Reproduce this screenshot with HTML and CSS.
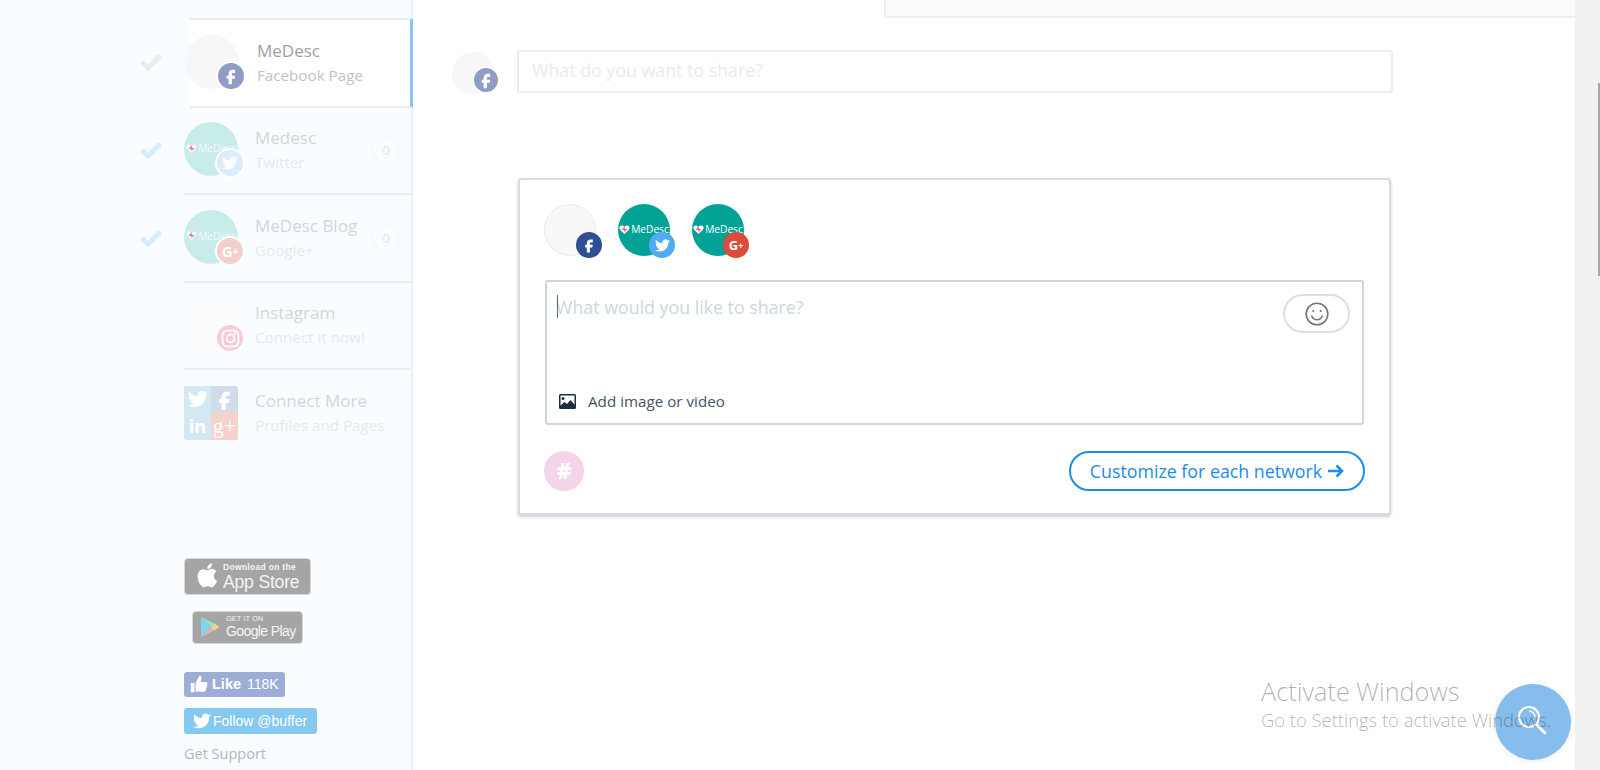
FILE: index.html
```html
<!DOCTYPE html>
<html lang="en">

<head>
  <meta charset="UTF-8">
  <title>Buffer</title>
  <link rel="stylesheet" href="styles.css">
</head>

<body>
  <svg class="defs" width="0" height="0">
    <symbol id="i-fb" viewBox="0 0 24 24"><path d="M14 8.5h3V4.6h-3c-2.9 0-4.9 2-4.9 4.9v2.1H6.8v3.8h2.3V22h4.1v-6.6h3.2l.6-3.800h-3.800V9.500c0-.6.3-1 .8-1z"/></symbol>
    <symbol id="i-tw" viewBox="0 0 24 24"><path d="M23.95 4.57a10 10 0 0 1-2.82.78 4.96 4.96 0 0 0 2.16-2.72c-.95.55-2 .96-3.13 1.19a4.92 4.92 0 0 0-8.38 4.48C7.69 8.1 4.07 6.13 1.64 3.16a4.82 4.82 0 0 0-.67 2.48c0 1.71.87 3.21 2.19 4.1a4.9 4.9 0 0 1-2.23-.62v.06a4.92 4.92 0 0 0 3.95 4.83 5 5 0 0 1-2.21.08 4.94 4.94 0 0 0 4.6 3.42A9.87 9.87 0 0 1 0 19.54a14 14 0 0 0 7.56 2.21c9.05 0 14-7.5 14-13.98 0-.21 0-.42-.02-.63A9.94 9.94 0 0 0 24 4.59z"/></symbol>
    <symbol id="i-heart" viewBox="0 0 24 24">
      <path d="M12 22 2.500 12.500C-.5 9.500.5 3 6.500 3 9 3 11 4.500 12 6.500 13 4.500 15 3 17.500 3c6 0 7 6.500 4 9.500z"/>
      <path d="M6 12h3l2-4 2 7 2-3h3" fill="none" stroke="#e8606a" stroke-width="2.500"/>
    </symbol>
    <symbol id="i-check" viewBox="0 0 24 18"><path d="M1 9.500 4.500 6l4.500 4.500L19.500 0 23.500 3.500 9 17.500z"/></symbol>
  </svg>

  <aside class="sidebar">
    <div class="row row-first">
      <div class="check-col"><svg class="check check-grey"><use href="#i-check"/></svg></div>
      <div class="row-body row-active">
        <div class="avatar avatar-blank">
          <span class="badge badge-fb-dim"><svg class="glyph glyph-f"><use href="#i-fb"/></svg></span>
        </div>
        <div class="row-text">
          <div class="row-name name-strong">MeDesc</div>
          <div class="row-sub sub-strong">Facebook Page</div>
        </div>
      </div>
    </div>

    <div class="row">
      <div class="check-col"><svg class="check"><use href="#i-check"/></svg></div>
      <div class="row-body">
        <div class="avatar avatar-teal-dim">
          <span class="logo"><svg class="logo-heart"><use href="#i-heart"/></svg>MeDesc</span>
          <span class="badge badge-tw-dim"><svg class="glyph"><use href="#i-tw"/></svg></span>
        </div>
        <div class="row-text">
          <div class="row-name">Medesc</div>
          <div class="row-sub">Twitter</div>
        </div>
        <span class="count">0</span>
      </div>
    </div>

    <div class="row">
      <div class="check-col"><svg class="check"><use href="#i-check"/></svg></div>
      <div class="row-body">
        <div class="avatar avatar-teal-dim">
          <span class="logo"><svg class="logo-heart"><use href="#i-heart"/></svg>MeDesc</span>
          <span class="badge badge-gp-dim gp-text">G<small>+</small></span>
        </div>
        <div class="row-text">
          <div class="row-name">MeDesc Blog</div>
          <div class="row-sub">Google+</div>
        </div>
        <span class="count">0</span>
      </div>
    </div>

    <div class="row">
      <div class="check-col"></div>
      <div class="row-body">
        <div class="avatar avatar-faint">
          <span class="badge badge-ig-dim">
            <svg class="glyph glyph-ig" viewBox="0 0 24 24" fill="none" stroke="#fff" stroke-width="2">
              <rect x="3" y="3" width="18" height="18" rx="5"/>
              <circle cx="12" cy="12" r="4.300"/>
              <circle cx="17.300" cy="6.700" r=".6"/>
            </svg>
          </span>
        </div>
        <div class="row-text">
          <div class="row-name">Instagram</div>
          <div class="row-sub">Connect it now!</div>
        </div>
      </div>
    </div>

    <div class="row">
      <div class="check-col"></div>
      <div class="row-body row-last">
        <div class="tiles">
          <span class="tile tile-tw"><svg class="glyph glyph-tile"><use href="#i-tw"/></svg></span>
          <span class="tile tile-fb"><svg class="glyph glyph-tile-f"><use href="#i-fb"/></svg></span>
          <span class="tile tile-in">in</span>
          <span class="tile tile-gp">g+</span>
        </div>
        <div class="row-text">
          <div class="row-name">Connect More</div>
          <div class="row-sub">Profiles and Pages</div>
        </div>
      </div>
    </div>

    <div class="side-foot">
      <div class="store store-apple">
        <svg class="apple" viewBox="0 0 24 24"><path d="M17.05 12.04c-.03-2.6 2.12-3.85 2.22-3.91-1.21-1.77-3.09-2.01-3.76-2.04-1.6-.16-3.12.94-3.93.94-.81 0-2.06-.92-3.39-.89-1.74.03-3.35 1.01-4.25 2.57-1.81 3.14-.46 7.8 1.3 10.35.86 1.25 1.89 2.65 3.24 2.6 1.3-.05 1.79-.84 3.36-.84 1.57 0 2.01.84 3.38.81 1.4-.03 2.28-1.27 3.14-2.53.99-1.45 1.39-2.85 1.42-2.92-.03-.01-2.72-1.04-2.75-4.14zM14.47 4.4c.72-.87 1.2-2.08 1.07-3.29-1.03.04-2.29.69-3.03 1.56-.66.77-1.24 2-1.09 3.18 1.15.09 2.33-.58 3.05-1.45z"/></svg>
        <div>
          <div class="store-small store-small-apple">Download on the</div>
          <div class="store-big">App Store</div>
        </div>
      </div>
      <div class="store store-google">
        <svg class="play" viewBox="0 0 20 22">
          <path fill="#7fd4ee" d="M1 1v20l10-10z"/>
          <path fill="#9fe0b8" d="M1 1l10 10 3.4-3.4z"/>
          <path fill="#eeb0ae" d="M1 21l10-10 3.4 3.4z"/>
          <path fill="#f1d68e" d="M14.4 7.6 11 11l3.4 3.4L19.500 11z"/>
        </svg>
        <div class="store-google-text">
          <div class="store-small">GET IT ON</div>
          <div class="store-big store-big-google">Google Play</div>
        </div>
      </div>
      <div class="social social-like">
        <svg class="thumb" viewBox="0 0 24 24"><path d="M1 10.500h5V23H1zM7.500 22V10.500L12.500 1c2.300 0 3.200 1.800 2.700 3.800l-1 4.400H21c2 0 2.600 1.500 2.200 3l-2.200 8c-.4 1.300-1.300 2-2.600 2z"/></svg>
        <b>Like</b> 118K
      </div>
      <div class="social social-follow">
        <svg class="thumb"><use href="#i-tw"/></svg>
        Follow @buffer
      </div>
      <div class="support">Get Support</div>
    </div>
  </aside>

  <main class="main">
    <div class="top-strip"></div>

    <div class="quick">
      <div class="mini-avatar">
        <span class="badge badge-fb-dim badge-mini"><svg class="glyph glyph-f"><use href="#i-fb"/></svg></span>
      </div>
      <div class="quick-input">What do you want to share?</div>
    </div>

    <section class="card">
      <div class="profiles">
        <div class="profile profile-blank">
          <span class="badge-sm badge-fb"><svg class="glyph-sm glyph-sm-f"><use href="#i-fb"/></svg></span>
        </div>
        <div class="profile profile-teal">
          <span class="logo logo-sm"><svg class="logo-heart"><use href="#i-heart"/></svg>MeDesc</span>
          <span class="badge-sm badge-tw"><svg class="glyph-sm"><use href="#i-tw"/></svg></span>
        </div>
        <div class="profile profile-teal">
          <span class="logo logo-sm"><svg class="logo-heart"><use href="#i-heart"/></svg>MeDesc</span>
          <span class="badge-sm badge-gp gp-text-sm">G<small>+</small></span>
        </div>
      </div>

      <div class="editor">
        <div class="editor-top">
          <div class="placeholder"><span class="caret"></span>What would you like to share?</div>
          <div class="emoji">
            <svg width="24" height="24" viewBox="0 0 24 24" fill="none" stroke="#777" stroke-width="1.600">
              <circle cx="12" cy="12" r="10.800"/>
              <circle cx="8.300" cy="9" r="1.100" fill="#777" stroke="none"/>
              <circle cx="15.700" cy="9" r="1.100" fill="#777" stroke="none"/>
              <path d="M6.800 14c1 2.600 3 3.800 5.200 3.800s4.200-1.200 5.200-3.800" stroke-linecap="round"/>
            </svg>
          </div>
        </div>
        <div class="add-media">
          <svg class="media-icon" viewBox="0 0 17 15">
            <path fill="#1f2d3d" fill-rule="evenodd" d="M1.500 0h14A1.500 1.500 0 0 1 17 1.500v12a1.500 1.500 0 0 1-1.500 1.500h-14A1.500 1.500 0 0 1 0 13.500v-12A1.500 1.500 0 0 1 1.500 0zM1.500 1.500v10l4-3.500 2.500 2 3.500-4 4 4.500v-9zM4 3a1.500 1.500 0 1 1 0 3 1.500 1.500 0 0 1 0-3z"/>
          </svg>
          Add image or video
        </div>
      </div>

      <div class="card-foot">
        <div class="hash">#</div>
        <div class="customize">Customize for each network
          <svg class="arrow" viewBox="0 0 16 14" fill="none" stroke="#1c8de8" stroke-width="2.600"><path d="M0 7h14M8.500 1.500 14 7l-5.500 5.500"/></svg>
        </div>
      </div>
    </section>
  </main>

  <div class="scrollbar"><div class="thumb-bar"></div></div>

  <div class="search-btn">
    <svg class="search-icon" width="36" height="36" viewBox="0 0 36 36" fill="none" stroke="#fff" stroke-width="2.200">
      <circle cx="16" cy="16" r="10"/>
      <path d="M23.500 23.500 32 32" stroke-width="2.800" stroke-linecap="round"/>
      <path d="M16 10a6 6 0 0 1 6 6" stroke-width="1.600"/>
    </svg>
  </div>

  <div class="activate">
    <div class="activate-title">Activate Windows</div>
    <div class="activate-sub">Go to Settings to activate Windows.</div>
  </div>
</body>

</html>
```

FILE: styles.css
```css
* {
  box-sizing: border-box;
}

html,
body {
  height: 100%;
}

body {
  margin: 0;
  display: flex;
  overflow: hidden;
  background: #fff;
  font-family: "Open Sans", sans-serif;
}

.defs {
  position: absolute;
}

/* sidebar */

.sidebar {
  width: 413px;
  flex: none;
  padding-top: 18px;
  background: #f9fdff;
  border-right: 2px solid #eef1f4;
}

.row {
  display: flex;
  height: 87.5px;
}

.row-first {
  height: 89.5px;
}

.check-col {
  width: 184px;
  flex: none;
  display: flex;
  align-items: center;
  justify-content: flex-end;
  padding-right: 21px;
}

.check {
  width: 24px;
  height: 18px;
  fill: #d9ecfd;
}

.check-grey {
  fill: #e9edf0;
}

.row-body {
  flex: 1;
  min-width: 0;
  display: flex;
  align-items: center;
  border-bottom: 2px solid #e9edf1;
}

.row-last {
  border-bottom: none;
  padding-bottom: 2px;
}

.row-active {
  margin: 0 -2px 0 6px;
  background: #fff;
  border-top: 2px solid #e9edf1;
  border-right: 3px solid #88c4fb;
}

.row-active .avatar {
  margin-left: -5px;
}

.avatar {
  position: relative;
  width: 54px;
  height: 54px;
  margin-bottom: 2px;
  flex: none;
  border-radius: 50%;
  display: flex;
  align-items: center;
  justify-content: center;
}

.avatar-blank {
  background: #f7f7f7;
}

.avatar-faint {
  background: #fcfcfd;
}

.avatar-teal-dim {
  background: #c8ecea;
}

.badge {
  position: absolute;
  right: -7px;
  bottom: -2px;
  width: 30px;
  height: 30px;
  border: 2px solid #fff;
  border-radius: 50%;
  display: flex;
  align-items: center;
  justify-content: center;
}

.badge-fb-dim {
  background: #8f9dc6;
}

.badge-tw-dim {
  background: #dbecfd;
}

.badge-gp-dim {
  background: #f4cfcb;
}

.badge-ig-dim {
  background: #f8ccd6;
  border-color: #fbfdff;
}

.glyph {
  width: 16px;
  height: 16px;
  fill: #fff;
}

.glyph-f {
  width: 20px;
  height: 20px;
}

.glyph-ig {
  width: 21px;
  height: 21px;
  fill: none;
}

.glyph-tile {
  width: 20px;
  height: 20px;
}

.glyph-tile-f {
  width: 25px;
  height: 25px;
}

.gp-text {
  color: #fff;
  font-size: 15px;
  font-weight: 700;
}

.gp-text small {
  font-size: 10px;
}

.logo {
  display: flex;
  align-items: center;
  gap: 1px;
  padding-bottom: 2px;
  color: #fff;
  font-size: 10.2px;
  white-space: nowrap;
  opacity: .85;
}

.logo-heart {
  width: 11px;
  height: 11px;
  flex: none;
  fill: #fff;
}

.row-text {
  margin-left: 17px;
  line-height: 25px;
}

.row-active .row-text {
  margin-left: 18px;
}

.row-name {
  font-size: 17px;
  color: #d2d6da;
}

.row-sub {
  font-size: 15.2px;
  color: #e6e9ec;
}

.name-strong {
  color: #9f9f9f;
}

.sub-strong {
  color: #bfc3c7;
}

.count {
  margin: 0 11px 0 auto;
  width: 28px;
  height: 28px;
  border: 1.5px solid #f0f6fd;
  border-radius: 50%;
  display: flex;
  align-items: center;
  justify-content: center;
  font-size: 13px;
  color: #dde9f8;
}

.tiles {
  width: 54px;
  height: 54px;
  flex: none;
  display: grid;
  grid-template-columns: 1fr 1fr;
  border-radius: 2px;
  overflow: hidden;
}

.tile {
  display: flex;
  align-items: center;
  justify-content: center;
  color: #fff;
  font-weight: 700;
}

.tile-tw,
.tile-in {
  background: #d3e8f3;
}

.tile-in {
  font-size: 18px;
}

.tile-fb {
  background: #d2dbe9;
}

.tile-gp {
  background: #f6d2cd;
  font-family: "Liberation Serif", serif;
  font-size: 22px;
  font-weight: 400;
}

.side-foot {
  padding: 100px 0 0 184px;
}

.store {
  display: flex;
  align-items: center;
  border-radius: 4px;
  background: #a5a5a5;
  border: 1px solid #d6d6d6;
  color: #f4f4f4;
  font-family: "Liberation Sans", sans-serif;
}

.store-apple {
  width: 127px;
  height: 37px;
  padding-left: 9px;
}

.store-google {
  width: 111px;
  height: 33px;
  margin: 16px 0 0 8px;
  padding-left: 7px;
}

.store-google-text {
  padding-bottom: 2px;
}

.apple {
  width: 28px;
  height: 28px;
  flex: none;
  margin-right: 1px;
  fill: #fff;
}

.play {
  width: 20px;
  height: 22px;
  flex: none;
  margin-right: 6px;
}

.store-small {
  font-size: 7.5px;
  line-height: 9px;
}

.store-small-apple {
  margin-top: 2px;
  font-size: 8.5px;
  font-weight: 700;
  letter-spacing: .3px;
}

.store-big {
  font-size: 17.6px;
  line-height: 20px;
  letter-spacing: -.2px;
}

.store-big-google {
  font-size: 14px;
  line-height: 16px;
  letter-spacing: -.6px;
}

.social {
  display: flex;
  align-items: center;
  gap: 2px;
  border-radius: 3px;
  color: #fff;
  font-family: "Liberation Sans", sans-serif;
  font-size: 14px;
}

.social b {
  margin: 0 4px 0 2px;
  font-size: 14.5px;
}

.social-like {
  width: 101px;
  height: 25px;
  margin-top: 28px;
  padding-left: 6px;
  background: #9dadd6;
}

.social-follow {
  width: 133px;
  height: 26px;
  margin-top: 11px;
  padding-left: 9px;
  background: #85c9f1;
}

.thumb {
  width: 18px;
  height: 18px;
  fill: #fff;
}

.support {
  margin-top: 10px;
  font-size: 14.5px;
  color: #b3b8bd;
}

/* main column */

.main {
  flex: 1;
  min-width: 0;
}

.top-strip {
  height: 18px;
  margin-left: 471px;
  background: #fafbfd;
  border: 2px solid #ebeef2;
  border-top: none;
  border-right: none;
  border-radius: 0 0 0 3px;
}

.quick {
  display: flex;
  align-items: flex-start;
  margin-top: 32px;
  padding-left: 39px;
}

.mini-avatar {
  position: relative;
  width: 42px;
  height: 42px;
  margin-top: 2px;
  flex: none;
  border-radius: 50%;
  background: #f7f7f7;
}

.badge-mini {
  right: -6px;
  bottom: 0;
  width: 28px;
  height: 28px;
}

.quick-input {
  width: 876px;
  height: 43px;
  margin-left: 23px;
  padding-left: 13px;
  border: 2px solid #e9eef3;
  border-radius: 3px;
  font-size: 17.8px;
  line-height: 37px;
  color: #e7ecf2;
}

.card {
  width: 873px;
  height: 337px;
  margin: 84px 0 0 105px;
  padding: 24px 24px 0;
  background: #fff;
  border: 2px solid #d6dde5;
  border-radius: 3px;
  box-shadow: 0 2px 3px rgba(100, 115, 130, .35);
}

.profiles {
  display: flex;
  gap: 22px;
}

.profile {
  position: relative;
  width: 52px;
  height: 52px;
  border-radius: 50%;
  display: flex;
  align-items: center;
  justify-content: center;
}

.profile-blank {
  background: #f8f8f8;
  border: 1px solid #eaeaea;
}

.profile-blank .badge-sm {
  right: -7px;
  bottom: -3px;
}

.profile-teal {
  background: #03a297;
}

.logo-sm {
  opacity: 1;
}

.badge-sm {
  position: absolute;
  right: -5px;
  bottom: -2px;
  width: 26px;
  height: 26px;
  border-radius: 50%;
  display: flex;
  align-items: center;
  justify-content: center;
}

.badge-fb {
  background: #2f4f90;
}

.badge-tw {
  background: #50abf1;
}

.badge-gp {
  background: #dd4b39;
}

.glyph-sm {
  width: 15px;
  height: 15px;
  fill: #fff;
}

.glyph-sm-f {
  width: 18px;
  height: 18px;
}

.gp-text-sm {
  color: #fff;
  font-size: 13px;
  font-weight: 700;
}

.gp-text-sm small {
  font-size: 9px;
}

.editor {
  width: 819px;
  height: 145px;
  margin: 24px 0 0 1px;
  padding: 12px 12px 12px 9px;
  border: 2px solid #cbd5e0;
  border-radius: 3px;
  display: flex;
  flex-direction: column;
  justify-content: space-between;
}

.editor-top {
  display: flex;
  justify-content: space-between;
  align-items: flex-start;
}

.placeholder {
  position: relative;
  font-size: 17.8px;
  line-height: 26px;
  color: #cdd7e1;
}

.caret {
  position: absolute;
  left: 1px;
  top: 1px;
  width: 1px;
  height: 23px;
  background: #5d6b78;
}

.emoji {
  width: 67px;
  height: 39px;
  border: 2px solid #dedede;
  border-radius: 20px;
  display: flex;
  align-items: center;
  justify-content: center;
}

.add-media {
  display: flex;
  align-items: center;
  gap: 12px;
  margin-left: 3px;
  font-size: 15.2px;
  line-height: 20px;
  color: #47535f;
}

.media-icon {
  width: 17px;
  height: 15px;
}

.card-foot {
  display: flex;
  align-items: center;
  justify-content: space-between;
  margin-top: 26px;
  width: 821px;
}

.hash {
  width: 40px;
  height: 40px;
  border-radius: 50%;
  background: #f3d4e9;
  color: #fff;
  font-size: 22px;
  font-weight: 800;
  line-height: 38px;
  text-align: center;
}

.customize {
  width: 296px;
  height: 40px;
  border: 2px solid #1c8de8;
  border-radius: 20px;
  display: flex;
  align-items: center;
  justify-content: center;
  gap: 6px;
  font-size: 17.8px;
  color: #1c8de8;
}

.arrow {
  width: 16px;
  height: 14px;
}

/* browser scrollbar */

.scrollbar {
  width: 25px;
  flex: none;
  padding: 83px 0 0 23px;
  background: #f1f1f1;
}

.thumb-bar {
  height: 193px;
  background: #a8a8a8;
}

/* things floating over the page */

.search-btn {
  position: absolute;
  left: 1495px;
  top: 684px;
  width: 76px;
  height: 76px;
  border-radius: 50%;
  background: #87bdec;
  box-shadow: 0 1px 6px rgba(0, 0, 0, .08);
  display: flex;
  align-items: center;
  justify-content: center;
}

.search-icon {
  margin: 0 4px 6px 0;
}

.activate {
  position: absolute;
  left: 1261px;
  top: 675px;
  color: rgba(0, 0, 0, .32);
  font-weight: 300;
  white-space: nowrap;
}

.activate-title {
  font-size: 25.3px;
  line-height: 33px;
}

.activate-sub {
  font-size: 18.4px;
  line-height: 24px;
}
```
